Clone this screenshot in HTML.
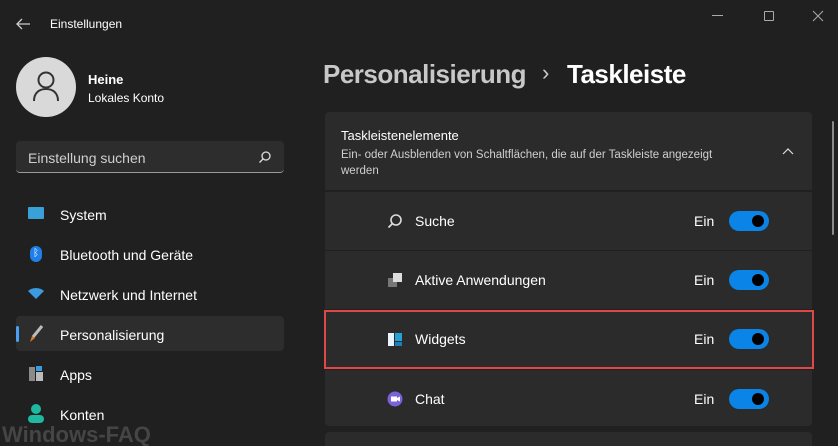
<!DOCTYPE html>
<html><head><meta charset="utf-8"><style>
*{margin:0;padding:0;box-sizing:border-box}
html,body{width:838px;height:446px;overflow:hidden}
body{background:#202020;font-family:"Liberation Sans",sans-serif;color:#fff;position:relative}
.a{position:absolute}
.nav{font-size:14px;color:#fff}
.card{background:#2b2b2b;left:325px;width:487px;border-radius:4px}
.row{position:absolute;left:325px;width:487px;height:58px;background:#2b2b2b}
.row .lbl{position:absolute;left:90px;top:21px;font-size:14px}
.row .ein{position:absolute;left:369px;top:21px;font-size:14px}
.tg{position:absolute;left:404px;top:19px;width:40px;height:20px;border-radius:10px;background:#0a84e6}
.tg:after{content:"";position:absolute;right:5px;top:4px;width:12px;height:12px;border-radius:6px;background:#000}
.row .ic{position:absolute;left:62px;top:21px;width:16px;height:16px}
</style></head><body>
<svg class="a" style="left:14px;top:16px" width="18" height="16"><path d="M16 8H3M8 3L3 8l5 5" stroke="#ccc" stroke-width="1.3" fill="none"/></svg>
<div class="a" style="left:50px;top:17px;font-size:12px">Einstellungen</div>
<div class="a" style="left:16px;top:57px;width:60px;height:60px;border-radius:30px;background:#d9d9d9"></div>
<svg class="a" style="left:30px;top:69px" width="32" height="34"><circle cx="16" cy="11" r="7.5" stroke="#333" stroke-width="2" fill="none"/><path d="M4 32c0-8 5-12 12-12s12 4 12 12" stroke="#333" stroke-width="2" fill="none"/></svg>
<div class="a" style="left:88px;top:72px;font-size:13px;font-weight:bold">Heine</div>
<div class="a" style="left:88px;top:91px;font-size:12px">Lokales Konto</div>
<div class="a" style="left:16px;top:141px;width:268px;height:32px;background:#2d2d2d;border-radius:4px;border-bottom:1px solid #9a9a9a"></div>
<div class="a" style="left:28px;top:150px;font-size:14px;color:#cfcfcf">Einstellung suchen</div>
<svg class="a" style="left:258px;top:150px" width="14" height="14"><circle cx="8" cy="6" r="4" stroke="#ddd" stroke-width="1.3" fill="none"/><path d="M5 9l-3.5 3.5" stroke="#ddd" stroke-width="1.3"/></svg>
<div class="a" style="left:28px;top:207px;width:16px;height:12px;background:#3aa0d8;border-radius:1px"></div>
<div class="a nav" style="left:60px;top:207px">System</div>
<div class="a" style="left:30px;top:246px;width:12px;height:16px;background:#1f7ee8;border-radius:6px;color:#fff;font-size:10px;text-align:center;line-height:16px">ᛒ</div>
<div class="a nav" style="left:60px;top:247px">Bluetooth und Geräte</div>
<svg class="a" style="left:27px;top:286px" width="18" height="14"><path d="M1 5a12 12 0 0 1 16 0L9 13z" fill="#3a9be0"/></svg>
<div class="a nav" style="left:60px;top:287px">Netzwerk und Internet</div>
<div class="a" style="left:16px;top:316px;width:268px;height:35px;background:#2d2d2d;border-radius:4px"></div>
<div class="a" style="left:16px;top:326px;width:3px;height:16px;background:#4aa0f0;border-radius:2px"></div>
<svg class="a" style="left:28px;top:325px" width="16" height="18"><path d="M14 1L5 12" stroke="#bbb" stroke-width="3"/><path d="M2 17l2-6 3 2z" fill="#e07a2a"/></svg>
<div class="a nav" style="left:60px;top:327px">Personalisierung</div>
<div class="a" style="left:29px;top:367px;width:6px;height:14px;background:#8a8a8a"></div>
<div class="a" style="left:36px;top:372px;width:7px;height:9px;background:#bbb"></div>
<div class="a" style="left:36px;top:366px;width:6px;height:5px;background:#3a9be0"></div>
<div class="a nav" style="left:60px;top:367px">Apps</div>
<div class="a" style="left:31px;top:404px;width:10px;height:10px;border-radius:5px;background:#1fb8a0"></div>
<div class="a" style="left:28px;top:415px;width:16px;height:8px;border-radius:4px;background:#1fb8a0"></div>
<div class="a nav" style="left:60px;top:407px">Konten</div>
<div class="a" style="left:2px;top:423px;font-size:22px;line-height:24px;font-weight:bold;color:#555;opacity:.7">Windows-FAQ</div>

<div class="a" style="left:712px;top:15px;width:11px;height:1px;background:#aaa"></div>
<div class="a" style="left:764px;top:11px;width:10px;height:10px;border:1px solid #aaa;border-radius:1px"></div>
<svg class="a" style="left:812px;top:10px" width="12" height="12"><path d="M1 1l10 10M11 1L1 11" stroke="#aaa" stroke-width="1"/></svg>
<div class="a" style="left:323px;top:59px;font-size:26px;font-weight:bold;color:#c8c8c8;letter-spacing:-0.5px">Personalisierung</div>
<div class="a" style="left:542px;top:60px;font-size:22px;color:#ccc">›</div>
<div class="a" style="left:567px;top:59px;font-size:26px;font-weight:bold;letter-spacing:-0.5px">Taskleiste</div>

<div class="a card" style="top:112px;height:78px;border-radius:4px 4px 0 0"></div>
<div class="a" style="left:341px;top:128px;font-size:13px">Taskleistenelemente</div>
<div class="a" style="left:341px;top:147px;font-size:11.5px;color:#cfcfcf;width:400px;line-height:16px">Ein- oder Ausblenden von Schaltflächen, die auf der Taskleiste angezeigt werden</div>
<svg class="a" style="left:782px;top:147px" width="12" height="8"><path d="M1 7l5-5 5 5" stroke="#ddd" stroke-width="1.2" fill="none"/></svg>

<div class="row" style="top:192px"><svg class="ic" viewBox="0 0 16 16"><circle cx="9" cy="7" r="5" stroke="#ddd" stroke-width="1.6" fill="none"/><path d="M5.5 10.5L1.5 14.5" stroke="#ddd" stroke-width="1.8"/></svg><div class="lbl">Suche</div><div class="ein">Ein</div><div class="tg"></div></div>
<div class="row" style="top:251px"><svg class="ic" viewBox="0 0 16 16"><rect x="1" y="6" width="9" height="9" fill="#777"/><rect x="6" y="1" width="9" height="9" fill="#ddd"/></svg><div class="lbl">Aktive Anwendungen</div><div class="ein">Ein</div><div class="tg"></div></div>
<div class="row" style="top:310px"><svg class="ic" viewBox="0 0 16 16"><rect x="1" y="2" width="6" height="13" fill="#e8f4ff"/><rect x="8" y="2" width="7" height="8" fill="#22a3d8"/><rect x="8" y="11" width="7" height="4" fill="#1a7fbf"/></svg><div class="lbl">Widgets</div><div class="ein">Ein</div><div class="tg"></div></div>
<div class="a" style="left:324px;top:310px;width:490px;height:59px;border:2px solid #e04848"></div>
<div class="row" style="top:370px;height:56px;border-radius:0 0 4px 4px"><svg class="ic" viewBox="0 0 16 16"><circle cx="8" cy="8" r="7.5" fill="#7b62d8"/><rect x="4" y="5.5" width="6" height="5" fill="#fff"/><path d="M10 7l3-1.5v5L10 9z" fill="#fff"/></svg><div class="lbl">Chat</div><div class="ein">Ein</div><div class="tg"></div></div>
<div class="a card" style="top:432px;height:14px;border-radius:4px 4px 0 0"></div>
<div class="a" style="left:832px;top:121px;width:2px;height:114px;background:#8a8a8a;border-radius:1px"></div>
</body></html>
